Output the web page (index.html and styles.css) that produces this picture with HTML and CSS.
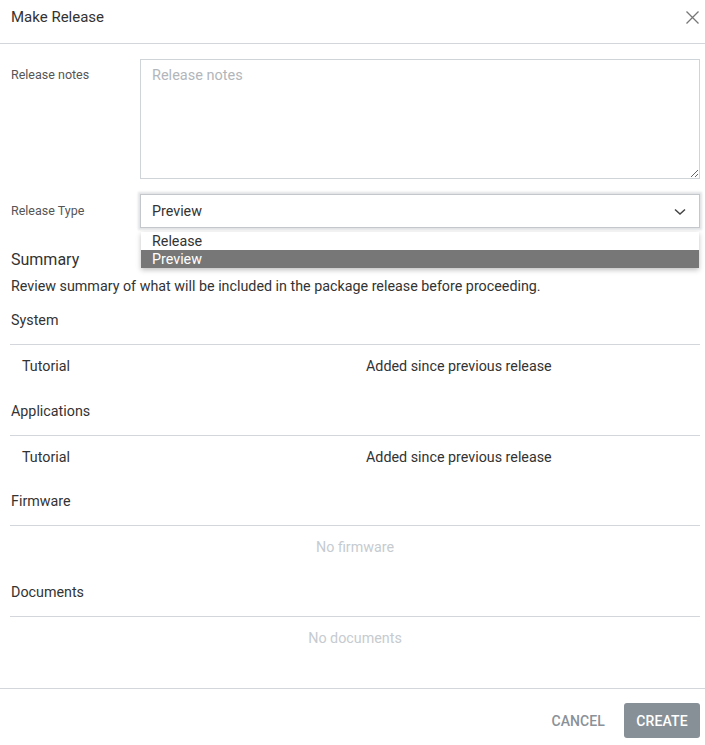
FILE: index.html
```html
<!DOCTYPE html>
<html lang="en">
<head>
<meta charset="utf-8">
<title>Make Release</title>
<link rel="stylesheet" href="styles.css">
</head>
<body>
<div class="dialog">
  <header class="dlg-header">
    <h1 class="dlg-title">Make Release</h1>
    <button class="close-btn" aria-label="Close">
      <svg width="13" height="13" viewBox="0 0 13 13"><path d="M0.5 0.5 L12.5 12.5 M12.5 0.5 L0.5 12.5" stroke="#777" stroke-width="1.3" fill="none"/></svg>
    </button>
  </header>

  <div class="dlg-body">
    <div class="form-row notes-row">
      <label class="form-label">Release notes</label>
      <textarea class="notes" placeholder="Release notes"></textarea>
    </div>

    <div class="form-row type-row">
      <label class="form-label">Release Type</label>
      <div class="select-wrap">
        <div class="select">
          <span>Preview</span>
          <svg width="12" height="8" viewBox="0 0 12 8"><path d="M1 1.5 L6 6 L11 1.5" stroke="#444" stroke-width="1.5" fill="none"/></svg>
        </div>
        <ul class="menu">
          <li class="opt">Release</li>
          <li class="opt selected">Preview</li>
        </ul>
      </div>
    </div>

    <h2 class="summary-title">Summary</h2>
    <p class="summary-desc">Review summary of what will be included in the package release before proceeding.</p>

    <section class="group">
      <div class="group-head">System</div>
      <div class="group-row"><span class="name">Tutorial</span><span class="status">Added since previous release</span></div>
    </section>
    <section class="group">
      <div class="group-head">Applications</div>
      <div class="group-row"><span class="name">Tutorial</span><span class="status">Added since previous release</span></div>
    </section>
    <section class="group">
      <div class="group-head">Firmware</div>
      <div class="group-row empty">No firmware</div>
    </section>
    <section class="group">
      <div class="group-head">Documents</div>
      <div class="group-row empty">No documents</div>
    </section>
  </div>

  <footer class="dlg-footer">
    <button class="btn-cancel">CANCEL</button>
    <button class="btn-create">CREATE</button>
  </footer>
</div>
</body>
</html>
```

FILE: styles.css
```css
* { box-sizing: border-box; }
html, body { margin: 0; padding: 0; background: #fff; }
body {
  font-family: Roboto, "Liberation Sans", Arial, sans-serif;
  color: #333;
  font-size: 14.3px;
}
.dialog { width: 705px; }

.dlg-header {
  display: flex;
  align-items: center;
  justify-content: space-between;
  height: 44px;
  padding: 0 5px 9px 11px;
  border-bottom: 1px solid #d3d6da;
}
.dlg-title {
  margin: 0;
  font-size: 15px;
  font-weight: 400;
  line-height: 18px;
  color: #333;
}
.close-btn {
  border: 0;
  background: none;
  padding: 0;
  width: 13px;
  height: 13px;
  margin-right: 1px;
  display: flex;
}

.dlg-body { padding: 15px 5px 16px 10px; }

.form-row { display: flex; align-items: flex-start; }
.form-label {
  width: 130px;
  flex: none;
  font-size: 12.5px;
  color: #555;
  padding-left: 1px;
}
.notes-row .form-label { line-height: 16px; padding-top: 8px; }
.notes {
  width: 560px;
  height: 120px;
  margin: 0;
  border: 1px solid #cfd4d9;
  border-radius: 0;
  padding: 7px 11px 6px;
  font-family: Roboto, "Liberation Sans", Arial, sans-serif;
  font-size: 14.5px;
  line-height: 18px;
  color: #333;
  resize: both;
  outline: none;
}
.notes::placeholder { color: #b2b6bb; }

.type-row { margin-top: 15px; align-items: center; }
.type-row .form-label { line-height: 16px; }
.select-wrap { position: relative; width: 560px; }
.select {
  height: 34px;
  border: 1px solid #c4c8cc;
  box-shadow: 0 0 2px 2px #e2e4e6;
  display: flex;
  align-items: center;
  justify-content: space-between;
  padding: 0 13px 0 11px;
  font-size: 14.3px;
  color: #333;
  background: #fff;
}
.select svg { margin-top: 1px; }
.menu {
  position: absolute;
  left: 1px;
  right: 1px;
  top: 38px;
  margin: 0;
  padding: 0;
  list-style: none;
  background: #fff;
  box-shadow: 0 2px 5px rgba(0,0,0,0.25);
  z-index: 2;
}
.opt {
  font-size: 14.3px;
  line-height: 18px;
  padding-left: 11px;
  color: #333;
}
.opt.selected { background: #777; color: #fff; }

.summary-title {
  margin: 22px 0 0;
  font-size: 16px;
  font-weight: 400;
  line-height: 20px;
  padding-left: 1px;
  color: #333;
}
.summary-desc {
  margin: 6px 0 14px;
  line-height: 20px;
  padding-left: 1px;
}

.group-head {
  line-height: 20px;
  padding: 0 0 14px 1px;
  border-bottom: 1px solid #d3d6da;
}
.group-row {
  display: flex;
  line-height: 20px;
  padding: 11px 0 24.5px 12px;
}
.group-row .name { width: 344px; }
.group-row.empty {
  justify-content: center;
  color: #c6cbd0;
  padding-left: 0;
}

.dlg-footer {
  border-top: 1px solid #d3d6da;
  display: flex;
  justify-content: flex-end;
  align-items: center;
  gap: 19px;
  padding: 14px 5px 7px;
}
.dlg-footer button {
  font-family: Roboto, "Liberation Sans", Arial, sans-serif;
  font-size: 14px;
  font-weight: 500;
  border: 0;
  letter-spacing: 0.1px;
}
.btn-cancel {
  background: none;
  color: #8a9198;
  padding: 0;
}
.btn-create {
  background: #878f97;
  color: #fff;
  width: 76px;
  height: 35px;
  border-radius: 3px;
}
```
